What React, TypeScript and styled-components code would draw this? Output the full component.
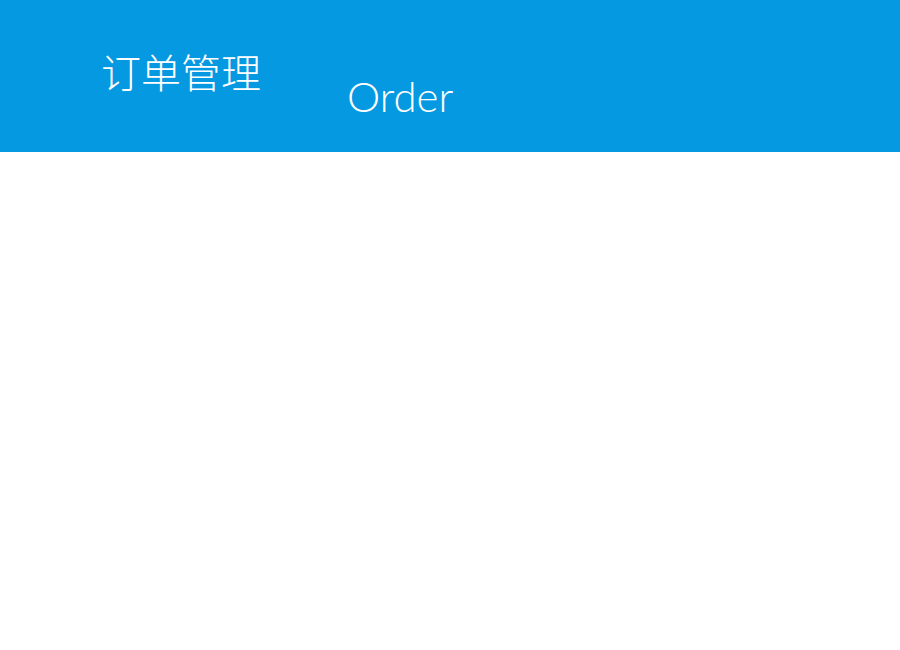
import React from 'react'
import styled, { createGlobalStyle } from 'styled-components'

const GlobalStyle = createGlobalStyle`
  html, body {
    margin: 0;
    padding: 0;
    background: #fff;
  }
`

export default function App() {
  return (
    <>
      <GlobalStyle />
      <Header>
        <Title>订单管理</Title>
        <Subtitle>Order</Subtitle>
      </Header>
    </>
  )
}

const Header = styled.header`
  display: flex;
  align-items: flex-start;
  height: 152px;
  padding-left: 101px;
  box-sizing: border-box;
  background: #0599e2;
  color: #fff;
`

const Title = styled.h1`
  margin: 51px 0 0;
  font-family: 'Noto Sans CJK SC', sans-serif;
  font-size: 40px;
  font-weight: 300;
  line-height: 1;
`

const Subtitle = styled.div`
  margin: 75px 0 0 86px;
  font-family: Lato, 'Open Sans', sans-serif;
  font-size: 42px;
  font-weight: 300;
  line-height: 1;
`
